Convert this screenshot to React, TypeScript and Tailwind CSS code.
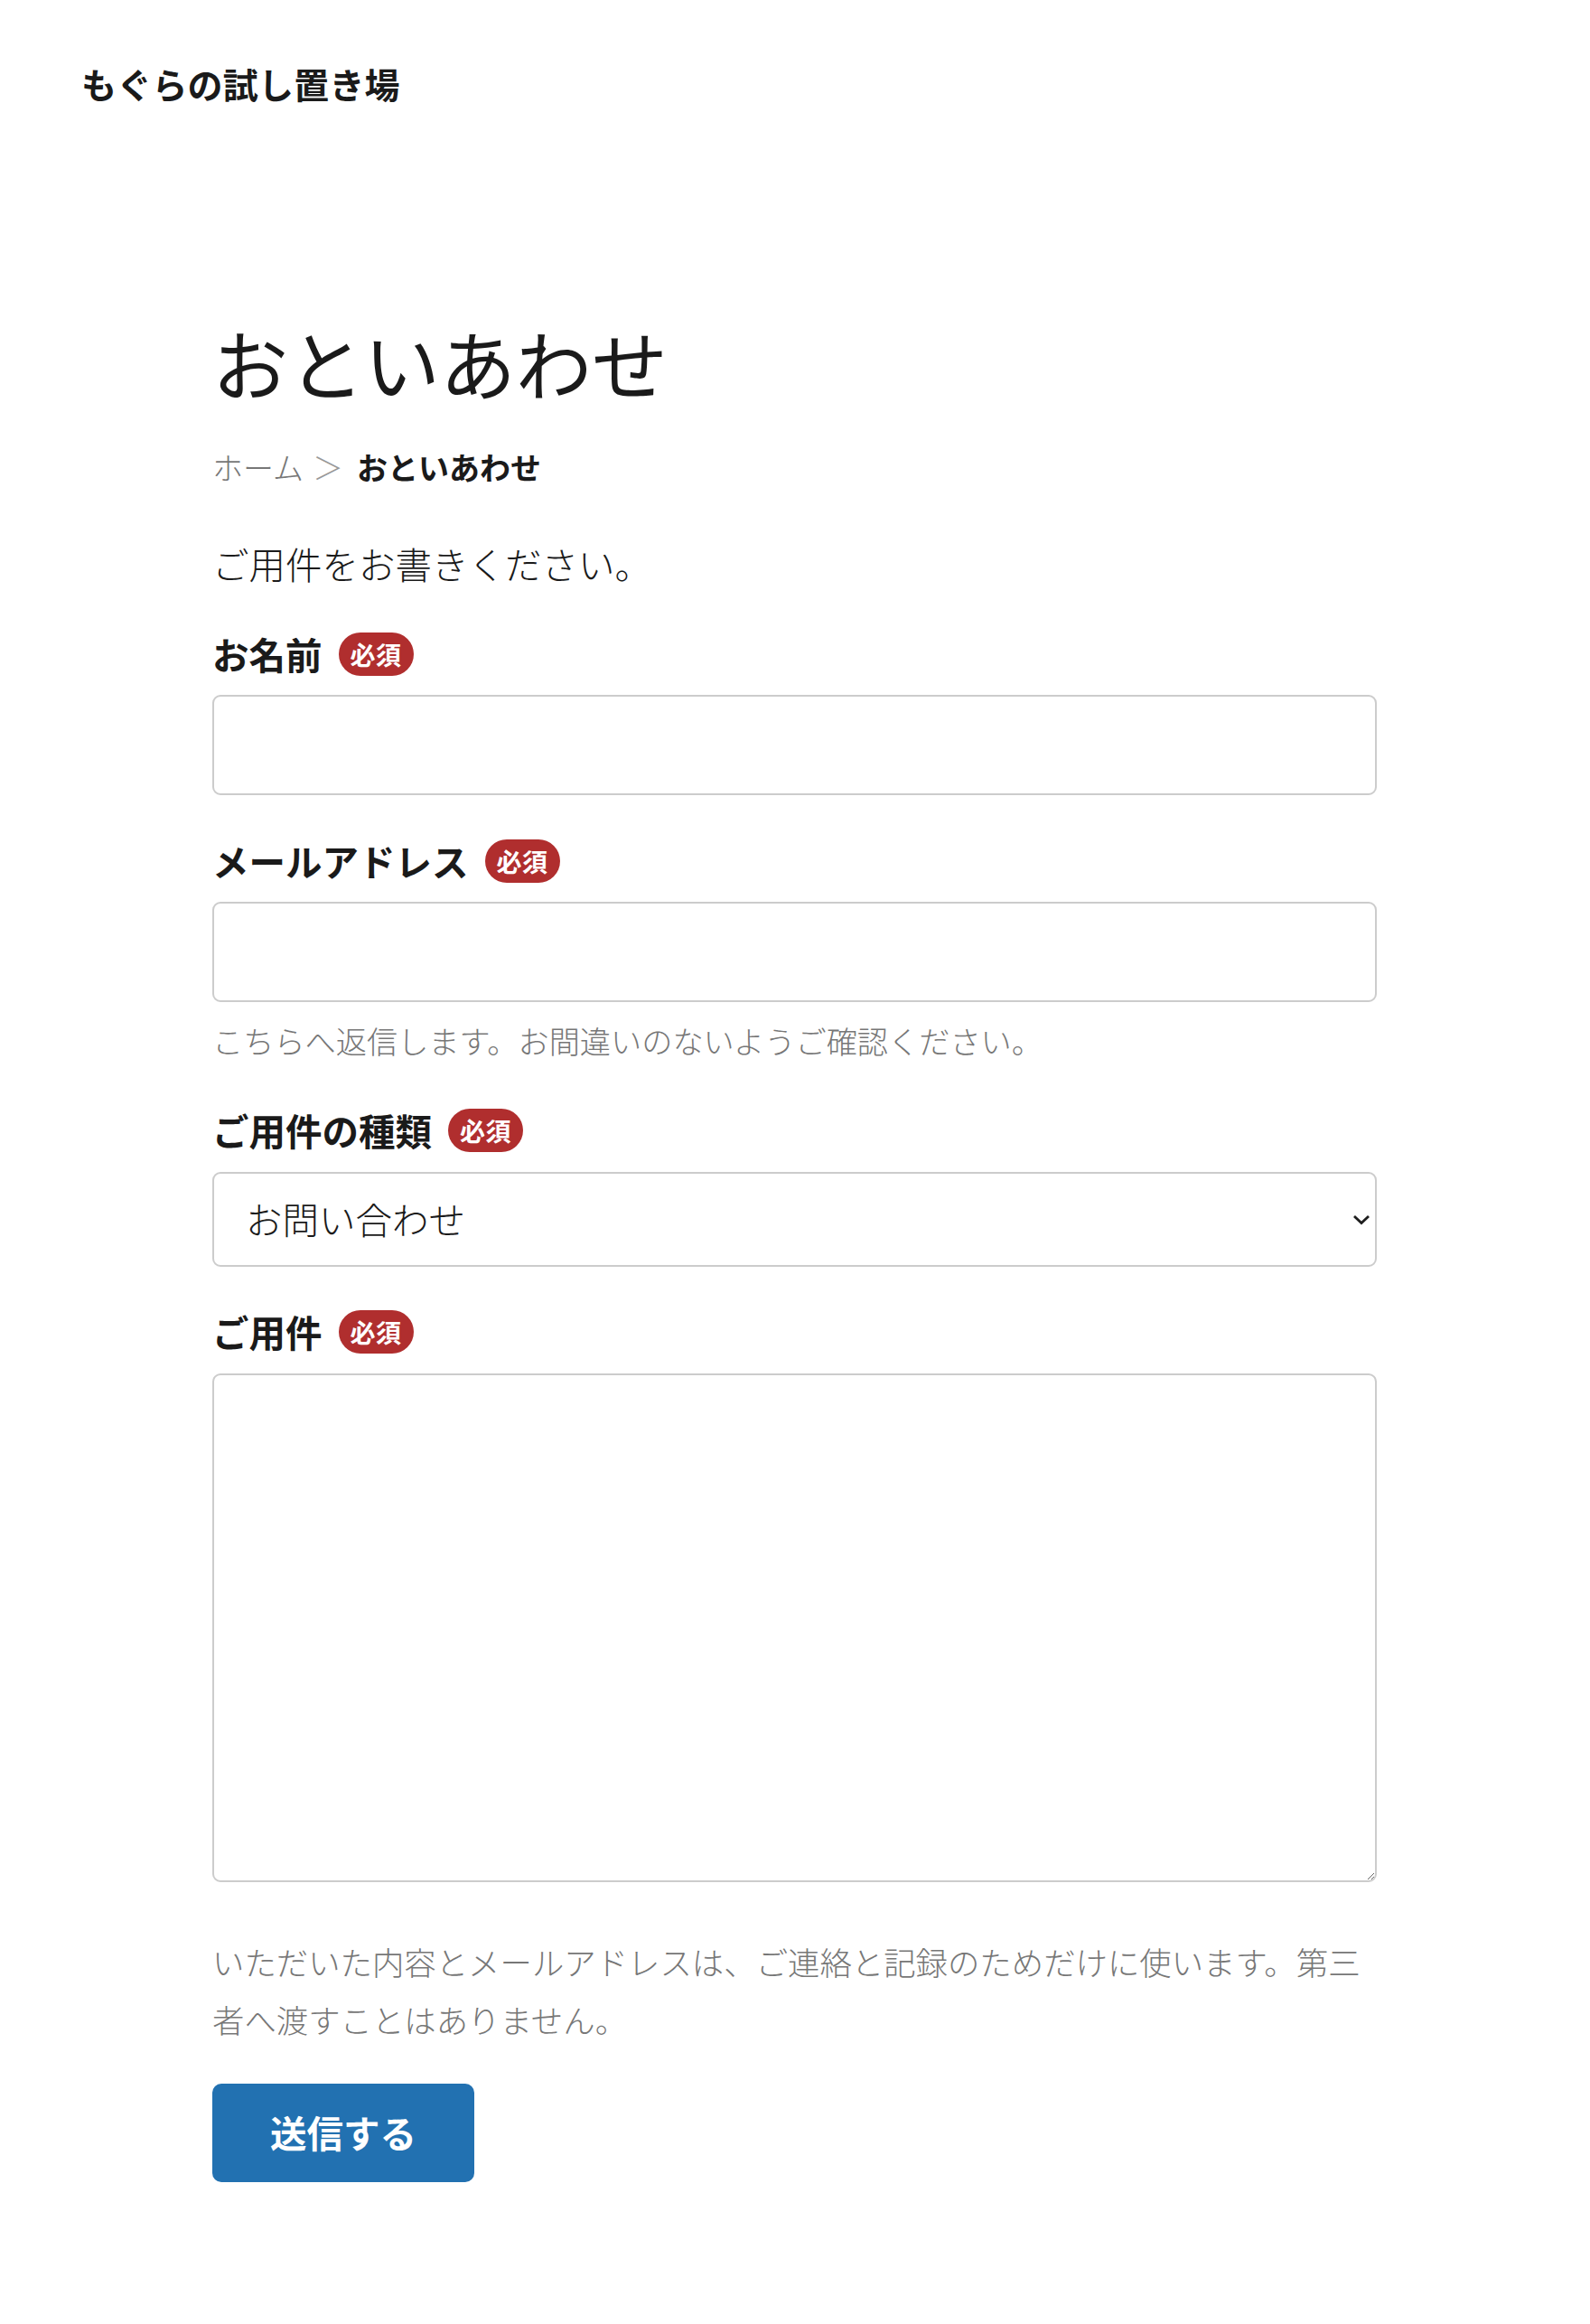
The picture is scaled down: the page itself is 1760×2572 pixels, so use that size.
import { useState } from "react";

const font = { fontFamily: '"Noto Sans CJK JP", "Noto Sans", sans-serif' };

function Required() {
  return (
    <span className="ml-[18px] inline-flex h-[48px] items-center rounded-full bg-[#b02e2e] px-[13px] text-[28px] font-bold leading-none tracking-[0.5px] text-white">
      必須
    </span>
  );
}

function FieldLabel({ children, className = "" }: { children: React.ReactNode; className?: string }) {
  return (
    <div className={`flex h-[58px] items-center text-[40.5px] font-bold leading-[58px] text-[#1a1a1a] ${className}`}>
      <span>{children}</span>
      <Required />
    </div>
  );
}

export default function App() {
  const [name, setName] = useState("");
  const [email, setEmail] = useState("");
  const [kind, setKind] = useState("お問い合わせ");
  const [body, setBody] = useState("");

  return (
    <div className="min-h-[2572px] w-[1760px] bg-white text-[#1a1a1a]" style={font}>
      {/* site header */}
      <header className="pl-[90px] pt-[63px]">
        <div className="text-[39px] font-bold leading-[58px] tracking-[0.2px]">もぐらの試し置き場</div>
      </header>

      <main className="ml-[235px] w-[1289px] pb-[150px]">
        <h1 className="mt-[231px] text-[84px] font-normal leading-[98px]">おといあわせ</h1>

        {/* breadcrumb */}
        <nav className="mt-[41px] flex items-center text-[34px] leading-[51px]">
          <span className="font-light text-[#777777]">ホーム</span>
          <span className="ml-[10px] mr-[15px] font-light text-[#999999]">＞</span>
          <span className="font-bold text-[#1a1a1a]">おといあわせ</span>
        </nav>

        <p className="mt-[53px] text-[40.5px] font-light leading-[58px]">ご用件をお書きください。</p>

        <form onSubmit={(e) => e.preventDefault()} className="flex flex-col">
          <FieldLabel className="mt-[42px]">お名前</FieldLabel>
          <input
            type="text"
            value={name}
            onChange={(e) => setName(e.target.value)}
            className="mt-[16px] h-[111px] w-full rounded-[9px] border-2 border-[#cccccc] px-[34px] text-[40px] outline-none"
          />

          <FieldLabel className="mt-[44px]">メールアドレス</FieldLabel>
          <input
            type="email"
            value={email}
            onChange={(e) => setEmail(e.target.value)}
            className="mt-[16px] h-[111px] w-full rounded-[9px] border-2 border-[#cccccc] px-[34px] text-[40px] outline-none"
          />
          <p className="mt-[17px] text-[34.2px] font-light leading-[51px] text-[#777777]">
            こちらへ返信します。お間違いのないようご確認ください。
          </p>

          <FieldLabel className="mt-[45px]">ご用件の種類</FieldLabel>
          <div className="relative mt-[17px]">
            <select
              value={kind}
              onChange={(e) => setKind(e.target.value)}
              className="h-[105px] w-full appearance-none rounded-[9px] border-2 border-[#cccccc] bg-white pl-[35px] pr-[60px] text-[40.5px] font-light text-[#1a1a1a] outline-none"
            >
              <option>お問い合わせ</option>
              <option>ご意見・ご感想</option>
              <option>その他</option>
            </select>
            <svg
              className="pointer-events-none absolute right-[7px] top-[47px]"
              width="20"
              height="12"
              viewBox="0 0 20 12"
              fill="none"
            >
              <path d="M2 2 L10 9.5 L18 2" stroke="#1e1e1e" strokeWidth="2.8" />
            </svg>
          </div>

          <FieldLabel className="mt-[43px]">ご用件</FieldLabel>
          <textarea
            value={body}
            onChange={(e) => setBody(e.target.value)}
            className="mt-[17px] h-[563px] w-full rounded-[9px] border-2 border-[#cccccc] px-[34px] py-[20px] text-[40px] outline-none"
          />

          <p className="mt-[56px] text-[35.4px] font-light leading-[64px] text-[#777777]">
            いただいた内容とメールアドレスは、ご連絡と記録のためだけに使います。第三者へ渡すことはありません。
          </p>

          <div className="mt-[39px]">
            <button
              type="submit"
              className="flex h-[109px] w-[290px] items-center justify-center rounded-[10px] bg-[#2271b1] text-[40.5px] font-bold text-white"
            >
              送信する
            </button>
          </div>
        </form>
      </main>
    </div>
  );
}
